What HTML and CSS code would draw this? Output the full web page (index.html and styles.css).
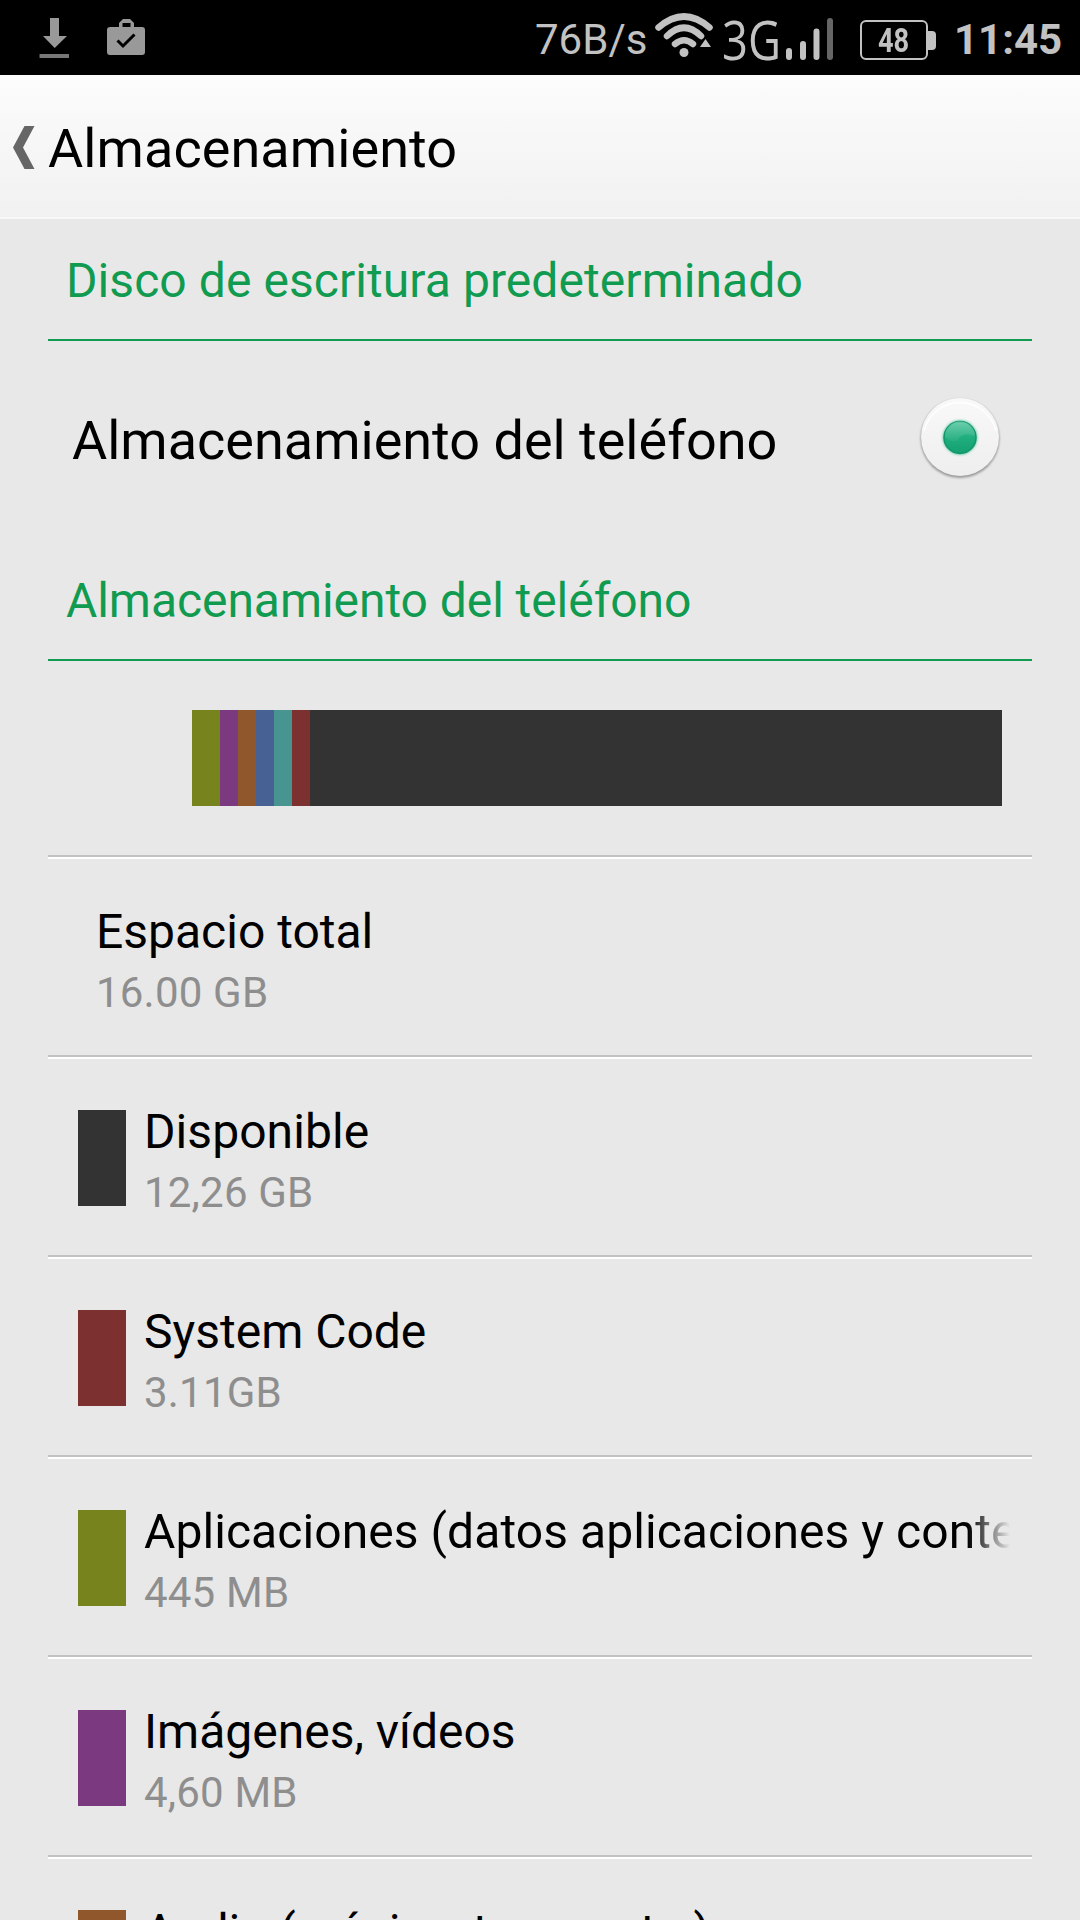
FILE: index.html
```html
<!DOCTYPE html>
<html lang="es">
<head>
<meta charset="utf-8">
<title>Almacenamiento</title>
<link rel="stylesheet" href="styles.css">
</head>
<body>
<div class="screen">
  <div class="status">
    <svg class="status-left" width="160" height="75" viewBox="0 0 160 75">
      <path fill="#999" d="M50 18h9v18h8L54.700 48 43 36h7z"/>
      <path fill="#777" d="M39.500 54H69v4H39.500z"/>
      <path fill="#999" fill-rule="evenodd" d="M119 27v-4l4-4h7l4 4v4h8q3 0 3 3v22q0 3-3 3h-32q-3 0-3-3V30q0-3 3-3zm3.500 0h8v-4h-8z"/>
      <path fill="none" stroke="#000" stroke-width="3" d="M117.500 40.500l5.500 5.500L134.500 34.500"/>
    </svg>
    <span class="speed">76B/s</span>
    <svg class="wifi" width="60" height="75" viewBox="0 0 60 75">
      <g fill="none" stroke="#c2c2c2" stroke-width="6.500" stroke-linecap="round">
        <path d="M3.500 27.500Q29 5.500 54.500 27.500"/>
        <path d="M12 36Q29 19.500 46 36"/>
        <path d="M20 44Q29 36.500 38 44"/>
      </g>
      <circle cx="29" cy="52.500" r="4.500" fill="#c2c2c2"/>
      <path fill="#c2c2c2" d="M50.500 39l5.500 8H45z"/>
    </svg>
    <span class="net">3G</span>
    <svg class="signal" width="52" height="75" viewBox="0 0 52 75">
      <g stroke="#c2c2c2" stroke-width="6" stroke-linecap="round">
        <path d="M6 51v6M20 44v13M33.500 31.500v25.500"/>
        <path stroke="#666" d="M47 21v36"/>
      </g>
    </svg>
    <div class="battery"><span>48</span></div>
    <span class="clock">11:45</span>
  </div>
  <header class="header">
    <svg width="24" height="46" viewBox="0 0 24 46"><path fill="#666" d="M13.500 1H23.500L12 22.500 23.500 44H13.500L2 22.500z"/></svg>
    <h1>Almacenamiento</h1>
  </header>
  <main class="list">
    <h2 class="section wide">Disco de escritura predeterminado</h2>
    <div class="choice">
      <span class="choice-label">Almacenamiento del teléfono</span>
      <svg class="radio" width="92" height="92" viewBox="0 0 92 92">
        <defs>
          <linearGradient id="knob" x2="0" y2="1"><stop stop-color="#f9f9f9"/><stop offset="1" stop-color="#eee"/></linearGradient>
          <linearGradient id="dot" x2="0" y2="1"><stop stop-color="#4fc49c"/><stop offset=".5" stop-color="#1fae7d"/><stop offset="1" stop-color="#14a072"/></linearGradient>
          <linearGradient id="shine" x2="0" y2="1"><stop stop-color="#79d3b3"/><stop offset="1" stop-color="#2bb084"/></linearGradient>
          <filter id="soft" x="-20%" y="-20%" width="140%" height="140%"><feGaussianBlur stdDeviation="1.200"/></filter>
        </defs>
        <circle cx="46" cy="47.500" r="39.500" fill="#999" filter="url(#soft)"/>
        <circle cx="46" cy="46" r="39" fill="url(#knob)"/>
        <path d="M10 40A37 37 0 0 1 82 40" fill="none" stroke="#fff" stroke-width="1.500"/>
        <circle cx="46" cy="46.500" r="17.500" fill="#7fd0b4" filter="url(#soft)"/>
        <circle cx="46" cy="46.500" r="16" fill="url(#dot)" stroke="#149768" stroke-width="1.500"/>
        <path d="M31 46A15 15 0 0 1 61 45Q48 40 43 50 36 51 31 46z" fill="url(#shine)" opacity=".7"/>
      </svg>
    </div>
    <h2 class="section tight">Almacenamiento del teléfono</h2>
    <div class="usage">
      <div class="bar"><i class="c-app" style="width:28px"></i><i class="c-img"></i><i class="c-audio"></i><i class="c-down"></i><i class="c-cache"></i><i class="c-sys"></i></div>
    </div>
    <div class="row total"><div class="text"><span class="title">Espacio total</span><span class="sum">16.00 GB</span></div></div>
    <div class="row"><i class="swatch c-free"></i><div class="text"><span class="title wide">Disponible</span><span class="sum">12,26 GB</span></div></div>
    <div class="row"><i class="swatch c-sys"></i><div class="text"><span class="title">System Code</span><span class="sum">3.11GB</span></div></div>
    <div class="row"><i class="swatch c-app"></i><div class="text"><span class="title wide fade">Aplicaciones (datos aplicaciones y contenido multimedia)</span><span class="sum">445 MB</span></div></div>
    <div class="row"><i class="swatch c-img"></i><div class="text"><span class="title">Imágenes, vídeos</span><span class="sum">4,60 MB</span></div></div>
    <div class="row"><i class="swatch c-audio"></i><div class="text"><span class="title tight">Audio (música, tonos, etc.)</span></div></div>
  </main>
</div>
</body>
</html>
```
FILE: styles.css
```css
* { box-sizing: border-box; }
body { margin: 0; background: #e8e8e8; font-family: Roboto, sans-serif; color: #000; }
h1, h2 { margin: 0; font-weight: 400; }
svg { display: block; flex: none; }
.screen { width: 1080px; height: 1920px; overflow: hidden; background: #e8e8e8; }

.status { display: flex; height: 75px; padding-top: 4px; background: #000; color: #c2c2c2; align-items: center; white-space: nowrap; }
.status svg { margin-top: -4px; }
.status .status-left { margin-right: 375px; }
.speed { width: 120px; font-size: 42px; }
.net { width: 61px; margin-left: 7px; font-family: "Open Sans", sans-serif; font-size: 54px; line-height: 71px; font-weight: 400; transform: scaleX(.84); transform-origin: 0 50%; }
.battery { position: relative; width: 68px; height: 40px; margin: 1px 0 0 25px; border: 2px solid #c2c2c2; border-radius: 6px; display: flex; align-items: center; justify-content: center; }
.battery::after { content: ""; position: absolute; left: 66px; top: 9px; width: 8px; height: 19px; border-radius: 0 4px 4px 0; background: #c2c2c2; }
.battery span { font-size: 34px; line-height: 38px; font-weight: 700; transform: scaleX(.8); }
.clock { margin-left: 26px; font-size: 42px; font-weight: 700; }

.header { display: flex; align-items: center; height: 144px; padding: 4px 0 0 11px; background: linear-gradient(#fcfcfc, #f1f1f1); border-bottom: 2px solid #f8f8f8; }
.header h1 { margin: 2px 0 0 13px; font-size: 54px; line-height: 64px; letter-spacing: .08px; }

.list { padding: 0 48px; white-space: nowrap; }
.section { height: 122px; border-bottom: 2px solid #109b50; padding: 34px 18px 0; color: #109b50; font-size: 48px; line-height: 56px; }
.choice { height: 198px; padding: 0 26px 0 24px; display: flex; align-items: center; justify-content: space-between; font-size: 54px; }
.radio { margin-top: -6px; }
.usage { height: 198px; padding: 49px 30px 0 144px; border-bottom: 2px solid #fff; box-shadow: inset 0 -2px #c2c2c2; }
.bar { display: flex; height: 96px; background: #333; }
.bar i { width: 18px; }
.row { display: flex; height: 200px; padding: 0 22px 0 30px; align-items: center; border-bottom: 2px solid #fff; box-shadow: inset 0 -2px #c2c2c2; }
.swatch { flex: none; width: 48px; height: 96px; margin-right: 18px; }
.text { display: flex; flex-direction: column; gap: 2px; flex: 1; min-width: 0; height: 128px; padding-top: 8px; }
.total .text { padding-left: 18px; }
.title { font-size: 48px; line-height: 60px; overflow: hidden; }
.sum { font-size: 42px; line-height: 58px; color: #8e8e8e; letter-spacing: .2px; }
.wide { letter-spacing: .07px; }
.tight { letter-spacing: -.06px; }
.fade { -webkit-mask-image: linear-gradient(90deg, #000 calc(100% - 42px), transparent); mask-image: linear-gradient(90deg, #000 calc(100% - 42px), transparent); }

.c-free { background: #333; }
.c-sys { background: #7d3030; }
.c-app { background: #77831c; }
.c-img { background: #7b3a80; }
.c-audio { background: #8f572b; }
.c-down { background: #476194; }
.c-cache { background: #479490; }
```
